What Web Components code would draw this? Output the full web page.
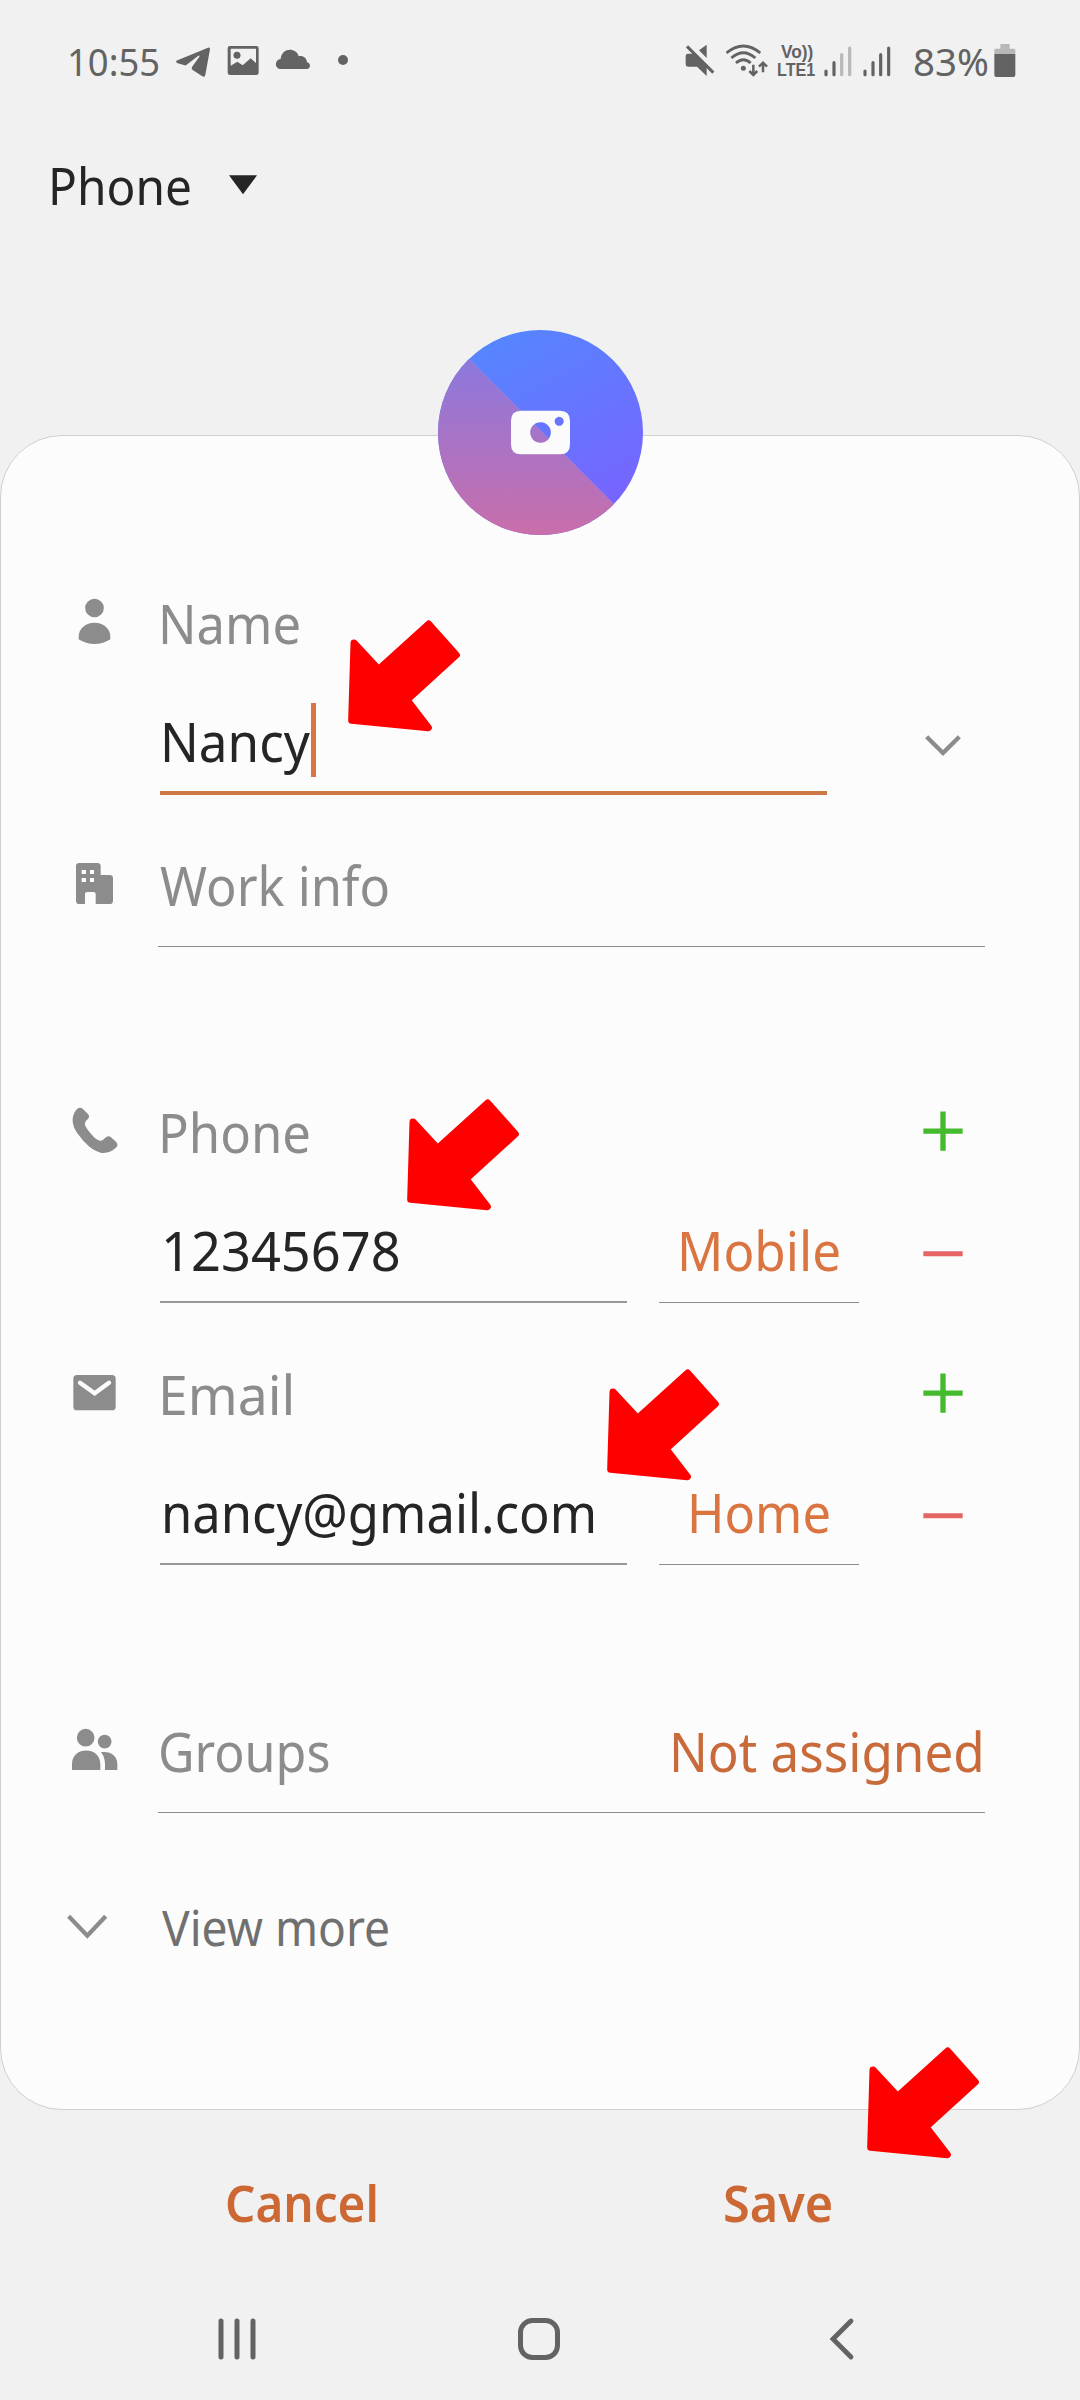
<!DOCTYPE html>
<html lang="en">
<head>
<meta charset="utf-8">
<title>Edit contact</title>
<style>
html,body{margin:0;padding:0;background:#f1f1f1}
body{width:1080px;height:2400px;overflow:hidden;font-family:"Noto Sans",sans-serif}
</style>
</head>
<body>
<contact-screen></contact-screen>
<script>
const define = (name, html, ready) => {
  const t = document.createElement('template');
  t.innerHTML = html;
  customElements.define(name, class extends HTMLElement {
    connectedCallback() {
      if (this.shadowRoot) return;
      this.attachShadow({ mode: 'open' }).append(t.content.cloneNode(true));
      if (ready) ready.call(this, this.shadowRoot);
    }
  });
};

/* Text whose box is exactly as wide as its visible ink. */
const pen = document.createElement('canvas').getContext('2d');
customElements.define('ink-text', class extends HTMLElement {
  connectedCallback() {
    if (this.shadowRoot) return;
    const size = this.getAttribute('size') || 54;
    const weight = this.getAttribute('weight') || 400;
    const family = `"${this.getAttribute('family') || 'Noto Sans'}", sans-serif`;
    const width = +this.getAttribute('ink');
    const text = this.getAttribute('text');
    pen.font = `${weight} ${size}px ${family}`;
    const m = pen.measureText(text);
    const k = width / (m.actualBoundingBoxLeft + m.actualBoundingBoxRight);
    this.attachShadow({ mode: 'open' }).innerHTML = `<style>
      :host{display:block;flex:none;width:${width}px;white-space:nowrap;
        font:${weight} ${size}px/var(--line,100px) ${family}}
      span{display:block;width:max-content;margin-left:${m.actualBoundingBoxLeft * k}px;
        transform-origin:0 50%;transform:scaleX(${k})}
    </style><span></span>`;
    this.shadowRoot.querySelector('span').textContent = text;
  }
});

/* name: [width, height, viewBox, markup] */
const ICONS = {
  telegram: [36, 40, '405 63 108 120', '<path d="M409 122Q406 127 413 130L434 136Q437 137 440 134L474 108Q481 104 478 110L456 141Q453 146 458 150L487 169Q495 173 496 164L510 88Q511 81 504 83Z"/>'],
  image: [32, 40, '561 63 96 120', '<path fill-rule="evenodd" d="M570 78H649Q656 78 656 85V158Q656 165 649 165H570Q563 165 563 158V85Q563 78 570 78ZM572 86V137L592 125L608 136L632 115L648 129V86Z"/><circle cx="591" cy="106" r="10.5"/>'],
  cloud: [36, 40, '705 63 108 120', '<path d="M724 147C702 147 703 119 722 117C724 83 769 80 776 109C789 106 800 114 801 127C814 130 812 147 800 147Z"/>'],
  dot: [12, 40, '891 63 36 120', '<circle cx="909" cy="120" r="15"/>'],
  mute: [30, 40, '75 63 90 120', '<path d="M84 101H102L140 139V168L111 140H84Q77 140 77 133V108Q77 101 84 101ZM117 91L140 74V114Z"/><path d="M88 74L166 152" stroke="#f1f1f1" stroke-width="5"/><path d="M81 79L160 158" stroke="#636363" stroke-width="9"/>'],
  wifi: [42, 40, '201 63 126 120', '<g fill="none" stroke="#636363" stroke-width="8.5"><path d="M202 99Q253 57 304 99M217 114Q253 82 289 114M231 129Q253 109 275 129"/><path d="M283 134V164M271 153L283 165L295 153M312 157V129M300 140L312 128L324 140" stroke-width="7.5"/></g><circle cx="253" cy="145" r="7.5"/>'],
  signalLow: [28, 40, '491 63 84 120', '<g stroke="#636363" stroke-width="9.5" stroke-linecap="round"><path d="M497 153V164M521 128V164"/><path d="M544 104V164M568 84V164" stroke="#b8b8b8"/></g>'],
  signal: [28, 40, '608 63 84 120', '<path stroke="#636363" stroke-width="9.5" stroke-linecap="round" d="M614 153V164M638 128V164M661 104V164M685 84V164"/>'],
  battery: [22, 40, '1001 63 66 120', '<path fill="#b8b8b8" d="M1023 72H1045Q1048 72 1048 75V86H1061Q1065 86 1065 90V102H1002V90Q1002 86 1006 86H1020V75Q1020 72 1023 72Z"/><path d="M1002 102H1065V165Q1065 171 1059 171H1008Q1002 171 1002 165Z"/>'],
  person: [55, 60, '45 39 165 180', '<circle cx="133.5" cy="84" r="28"/><path d="M86 170C86 145 107 128 133.5 128S181 145 181 170V178Q160 192 133.5 192Q107 192 86 178Z"/>'],
  work: [55, 60, '45 75 165 180', '<path fill-rule="evenodd" d="M88 99H142Q152 99 152 109V135H179Q189 135 189 145V212Q189 222 179 222H137V192Q137 186 131 186H111Q105 186 105 192V222H88Q78 222 78 212V109Q78 99 88 99ZM95 120V132H108V120ZM120 120V132H132V120ZM95 144V156H108V144ZM120 144V156H132V144Z"/>'],
  phone: [55, 60, '45 66 165 180', '<path d="M81 87Q90 79 99 87L114 102Q121 110 113 118Q104 124 104 132Q108 146 132 172Q145 183 153 182Q160 180 165 174Q174 165 182 171L198 185Q206 194 199 202Q178 223 151 218Q119 211 82 160Q54 118 81 87Z"/>'],
  email: [55, 60, '45 852 165 180', '<rect x="70" y="885" width="127" height="106" rx="11"/><path d="M90 908L134 940L177 908" fill="none" stroke="#fcfcfc" stroke-width="13" stroke-linecap="round"/>'],
  groups: [55, 60, '45 123 165 180', '<circle cx="107" cy="173" r="26.5"/><circle cx="164" cy="185" r="20.5"/><path d="M66 270V251C67 198 150 198 151 251V270ZM153 217C181 213 202 227 202 252V270H165V250Q164 230 153 217Z"/>'],
  more: [55, 60, '45 651 165 180', '<path d="M56 709L112 767L167 709" fill="none" stroke="#8c8c8c" stroke-width="13"/>'],
  expand: [40, 60, '-60 -90 120 180', '<path d="M-49 -25L0 24L49 -25" fill="none" stroke="#8c8c8c" stroke-width="13"/>'],
  plus: [40, 60, '-60 -90 120 180', '<path d="M-59 -2.5H59M0 -61.5V56.5" stroke="#43bb2c" stroke-width="16"/>'],
  minus: [40, 60, '-60 -90 120 180', '<path d="M-59 11H59" stroke="#e56464" stroke-width="15"/>'],
  triangle: [28, 30, '0 0 84 90', '<path d="M0 25H84L42 82Z" fill="#252525"/>'],
  recents: [40, 44, '0 0 40 44', '<path d="M3 4V40M19 4V40M35 4V40" stroke="#636363" stroke-width="5" stroke-linecap="round"/>'],
  home: [44, 44, '0 0 44 44', '<rect x="3.5" y="3.5" width="37" height="37" rx="12" fill="none" stroke="#636363" stroke-width="5"/>'],
  back: [26, 44, '0 0 26 44', '<path d="M22 4L4 22L22 40" fill="none" stroke="#636363" stroke-width="4.8" stroke-linecap="round"/>'],
  arrow: [117, 115, '890 115 351 345', '<path d="M1138 133L1221 226L1073 361L1137 444L907 422L914 190L988 269Z" fill="#fe0000" stroke="#fe0000" stroke-width="21" stroke-linejoin="round"/>'],
  camera: [205, 205, '114 60 615 615', `<defs>
      <linearGradient id="a" x1="300" y1="60" x2="620" y2="640" gradientUnits="userSpaceOnUse"><stop stop-color="#5586ff"/><stop offset="1" stop-color="#7962ff"/></linearGradient>
      <linearGradient id="b" x1="0" y1="140" x2="0" y2="675" gradientUnits="userSpaceOnUse"><stop stop-color="#8b78de"/><stop offset="1" stop-color="#c96eaa"/></linearGradient>
      <clipPath id="c"><path d="M108 47L741 682H100V47Z"/></clipPath></defs>
      <circle cx="421.5" cy="367.5" r="307.5" fill="url(#a)"/><circle cx="421.5" cy="367.5" r="307.5" fill="url(#b)" clip-path="url(#c)"/><path d="M208 147L641 582" stroke="#a58fe8" stroke-width="1.5"/>
      <path fill="#fbfbfb" fill-rule="evenodd" d="M363 302H480Q510 302 510 332V403Q510 433 480 433H363Q333 433 333 403V332Q333 302 363 302ZM421.5 336.5A31 31 0 1 0 421.6 336.5ZM477.5 320.5A13.5 13.5 0 1 0 477.6 320.5Z"/>`]
};
customElements.define('ui-icon', class extends HTMLElement {
  static observedAttributes = ['name'];
  attributeChangedCallback() {
    const [w, h, box, body] = ICONS[this.getAttribute('name')];
    const root = this.shadowRoot || this.attachShadow({ mode: 'open' });
    root.innerHTML =
      `<style>:host{display:block;flex:none;width:${w}px;height:${h}px}svg{display:block}</style>
       <svg width="${w}" height="${h}" viewBox="${box}" fill="currentColor">${body}</svg>`;
  }
});

define('status-bar', `<style>
  :host{display:flex;align-items:center;height:122px;box-sizing:border-box;padding:0 64px 0 70px;color:#636363}
  .left,.right{display:flex;align-items:center}
  .right{margin-left:auto}
  .lte{--line:18px;display:flex;flex-direction:column}
  .lte ink-text:first-child{margin-left:3px}
</style>
<div class="left">
  <ink-text text="10:55" size="39" ink="89"></ink-text>
  <ui-icon name="telegram" style="margin-left:16px"></ui-icon>
  <ui-icon name="image" style="margin-left:16px"></ui-icon>
  <ui-icon name="cloud" style="margin-left:16px"></ui-icon>
  <ui-icon name="dot" style="margin-left:26px"></ui-icon>
</div>
<div class="right">
  <ui-icon name="mute"></ui-icon>
  <ui-icon name="wifi" style="margin-left:11px"></ui-icon>
  <div class="lte" style="margin-left:9.5px">
    <ink-text text="Vo))" size="17.5" weight="700" family="Liberation Sans" ink="31.5"></ink-text>
    <ink-text text="LTE1" size="17.5" weight="700" family="Liberation Sans" ink="37.5"></ink-text>
  </div>
  <ui-icon name="signalLow" style="margin-left:9px"></ui-icon>
  <ui-icon name="signal" style="margin-left:11px"></ui-icon>
  <ink-text text="83%" size="39" ink="73.5" style="margin-left:23px"></ink-text>
  <ui-icon name="battery" style="margin-left:6.5px"></ui-icon>
</div>`);

define('account-picker', `<style>
  :host{display:flex;align-items:center;height:126px;padding-left:52px;gap:38px;color:#252525}
  ui-icon{margin-bottom:7px}
</style>
<ink-text text="Phone" size="51" ink="138.5"></ink-text><ui-icon name="triangle"></ui-icon>`);

define('contact-avatar', `<style>
  :host{display:flex;justify-content:center;height:205px;margin:82px 0 -100px;position:relative;z-index:1}
</style><ui-icon name="camera"></ui-icon>`);

/* Icon column, then a label, then whatever sits at the right edge. */
define('form-row', `<style>
  :host{display:flex;align-items:center;height:100px;color:#8c8c8c}
  .body{display:flex;align-items:center;flex:1;height:100%;margin-left:38px}
  ::slotted([slot=end]){margin-left:auto}
</style>
<ui-icon></ui-icon><div class="body"><slot></slot><slot name="end"></slot></div>`,
function (root) { root.querySelector('ui-icon').setAttribute('name', this.getAttribute('icon')); });

/* Underlined entry field. */
define('entry-field', `<style>
  :host{display:flex;align-items:center;height:100px;padding-bottom:1px;border-bottom:2px solid #979797;color:#252525}
</style><slot></slot>`);

define('contact-form', `<style>
  :host{display:flex;flex-direction:column;height:1675px;box-sizing:border-box;background:#fcfcfc;border:1px solid #d0d0d0;border-radius:62px;padding:137px 94px 0 64px}
  .fields{display:flex;align-items:flex-start;margin:18px 0 0 95px}
  .name{width:667px;padding-bottom:0;border-bottom:4px solid #cd7747}
  .caret{width:5px;height:74px;background:#da7541;margin:-2px 0 0 0.5px}
  .value{width:467px}
  .type{width:200px;margin-left:32px;padding-bottom:2px;border-bottom:1px solid #8c8c8c;justify-content:center;color:#da7541}
  .type ink-text{margin-left:2px}
  .action{margin-left:auto;margin-right:22px;display:flex;align-items:center;height:100px}
  .line{height:1px;background:#8c8c8c;margin:11px 0 0 93px}
  ui-icon[slot=end]{margin-right:22px}
</style>
<form-row icon="person"><ink-text text="Name" ink="136" style="margin-left:5px"></ink-text></form-row>
<div class="fields"><entry-field class="name"><ink-text text="Nancy" ink="145.5" style="margin-left:5px"></ink-text><div class="caret"></div></entry-field>
  <div class="action"><ui-icon name="expand" style="margin-top:8px"></ui-icon></div></div>
<form-row icon="work" style="margin-top:40px"><ink-text text="Work info" ink="227.5" style="margin-left:1.5px"></ink-text></form-row>
<div class="line"></div>
<form-row icon="phone" style="margin-top:135px"><ink-text text="Phone" ink="146" style="margin-left:5px"></ink-text><ui-icon name="plus" slot="end"></ui-icon></form-row>
<div class="fields"><entry-field class="value"><ink-text text="12345678" ink="234" style="margin-left:5px"></ink-text></entry-field>
  <entry-field class="type"><ink-text text="Mobile" ink="157"></ink-text></entry-field>
  <div class="action"><ui-icon name="minus"></ui-icon></div></div>
<form-row icon="email" style="margin-top:41px"><ink-text text="Email" ink="128.5" style="margin-left:5px"></ink-text><ui-icon name="plus" slot="end"></ui-icon></form-row>
<div class="fields"><entry-field class="value"><ink-text text="nancy@gmail.com" ink="429" style="margin-left:5px"></ink-text></entry-field>
  <entry-field class="type"><ink-text text="Home" ink="137"></ink-text></entry-field>
  <div class="action"><ui-icon name="minus"></ui-icon></div></div>
<form-row icon="groups" style="margin-top:136px"><ink-text text="Groups" ink="168" style="margin-left:3px"></ink-text><ink-text slot="end" text="Not assigned" ink="307" style="margin-right:4.5px;color:#c86a3a"></ink-text></form-row>
<div class="line"></div>
<form-row icon="more" style="margin-top:64px"><ink-text text="View more" size="49" ink="226.5" style="margin-left:3.5px;color:#707070"></ink-text></form-row>`);

define('action-bar', `<style>
  :host{display:flex;align-items:center;height:184px;box-sizing:border-box;padding:2px 0 0 226.5px;color:#cc6833}
</style>
<ink-text text="Cancel" size="50" weight="600" ink="149"></ink-text>
<ink-text text="Save" size="50" weight="600" ink="106" style="margin-left:349.5px"></ink-text>`);

define('nav-bar', `<style>
  :host{display:flex;align-items:center;height:90px;padding-left:218px;color:#636363}
</style>
<ui-icon name="recents"></ui-icon><ui-icon name="home" style="margin-left:259px"></ui-icon><ui-icon name="back" style="margin-left:267.5px"></ui-icon>`);

/* Callout arrow pinned over the page. */
define('callout-arrow', `<style>:host{display:block;position:absolute;z-index:2}</style><ui-icon name="arrow"></ui-icon>`);

define('contact-screen', `<style>
  :host{display:flex;flex-direction:column;position:relative;width:1080px;height:2400px;background:#f1f1f1}
</style>
<status-bar></status-bar>
<account-picker></account-picker>
<contact-avatar style="padding-left:1px"></contact-avatar>
<contact-form></contact-form>
<action-bar></action-bar>
<nav-bar></nav-bar>
<callout-arrow style="left:346.4px;top:618.4px"></callout-arrow>
<callout-arrow style="left:405.4px;top:1096.7px"></callout-arrow>
<callout-arrow style="left:605.4px;top:1367.4px"></callout-arrow>
<callout-arrow style="left:864.5px;top:2045.2px"></callout-arrow>`);
</script>
</body>
</html>
